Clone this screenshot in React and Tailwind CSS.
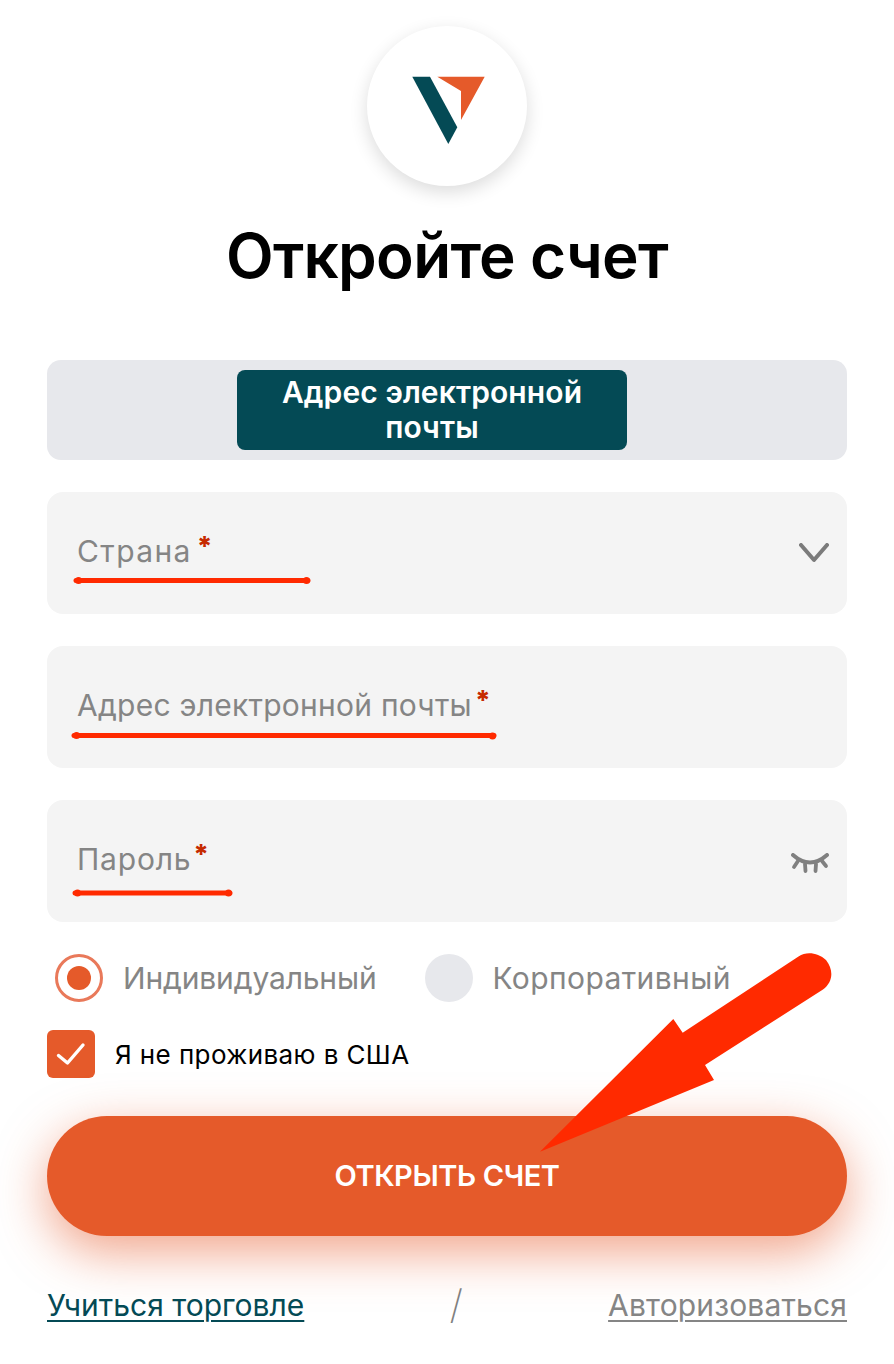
import React from "react";

const F = { fontFamily: '"Inter", "Noto Sans", sans-serif' };

function Field({ label, track, star, icon }) {
  return (
    <div className="flex h-[122px] items-center justify-between rounded-[16px] bg-[#f4f4f4] pl-[30px] pr-[18px]">
      <div className="flex items-start pb-[4px] text-[30px] leading-[36px] text-[#858585]">
        <span className={track}>{label}</span>
        <span className={`mt-[2px] text-[27px] font-extrabold leading-[24px] text-[#c62a00] ${star}`}>*</span>
      </div>
      {icon}
    </div>
  );
}

function Chevron() {
  return (
    <svg width="30" height="20" viewBox="0 0 30 20" fill="none">
      <path d="M2 2L15 17L28 2" stroke="#7b7b7b" strokeWidth="4" strokeLinecap="round" strokeLinejoin="round" />
    </svg>
  );
}

function Lash() {
  return (
    <svg width="40" height="22" viewBox="0 0 40 22" fill="none" className="mt-[6px] -mr-[1px]">
      <path d="M3 2Q20 17 37 2" stroke="#808080" strokeWidth="4" strokeLinecap="round" />
      <path d="M8 8L4 14M15 11L15.5 18M26 11L25.5 18M32 8L36 13" stroke="#808080" strokeWidth="3.8" strokeLinecap="round" />
    </svg>
  );
}

export default function App() {
  return (
    <div className="relative min-h-[1364px] w-[894px] overflow-hidden bg-white" style={F}>
      <div className="flex flex-col px-[47px] pt-[26px]">
        <div className="flex h-[160px] w-[160px] items-center justify-center self-center rounded-full bg-white shadow-[0_6px_18px_rgba(0,0,0,0.14)]">
          <svg width="74" height="68" viewBox="412 76 74 68" className="ml-[4px] mt-[8px]">
            <path d="M412.3 76.7H430L457.3 127.3L448.3 144Z" fill="#044a55" />
            <path d="M437.3 76.7H484.7L461 120V91Z" fill="#e55a2a" />
          </svg>
        </div>

        <h1 className="mt-[30px] text-center text-[62px] font-semibold leading-[80px] tracking-[-0.7px] text-black">
          Откройте счет
        </h1>

        <div className="mt-[64px] flex h-[100px] items-center rounded-[14px] bg-[#e7e8ec] pl-[190px]">
          <div className="flex h-[80px] w-[390px] items-center justify-center rounded-[8px] bg-[#044a55] text-center text-[30px] font-semibold leading-[35px] tracking-[0.1px] text-white">
            Адрес электронной<br />почты
          </div>
        </div>

        <div className="mt-[32px] flex flex-col gap-[32px]">
          <Field label="Страна" track="tracking-[1.4px]" star="ml-[5px]" icon={<Chevron />} />
          <Field label="Адрес электронной почты" track="tracking-[0.25px]" star="ml-[3px]" />
          <Field label="Пароль" track="tracking-[0.8px]" star="ml-[2px]" icon={<Lash />} />
        </div>

        <div className="mt-[32px] flex h-[48px] items-center text-[30px] text-[#858585]">
          <div className="ml-[8px] flex h-[48px] w-[48px] items-center justify-center rounded-full border-[3px] border-[#e9795a] bg-white">
            <div className="h-[24px] w-[24px] rounded-full bg-[#e55a2a]" />
          </div>
          <span className="ml-[20px] tracking-[-0.15px]">Индивидуальный</span>
          <div className="ml-[48px] h-[48px] w-[48px] rounded-full bg-[#e7e8ec]" />
          <span className="ml-[20px] tracking-[0.4px]">Корпоративный</span>
        </div>

        <div className="mt-[28px] flex h-[48px] items-center">
          <div className="flex h-[48px] w-[48px] items-center justify-center rounded-[6px] bg-[#e55a2a]">
            <svg width="30" height="24" viewBox="0 0 30 24" fill="none">
              <path d="M2.5 13.5L11.5 21L27 3" stroke="#fff" strokeWidth="3.4" strokeLinecap="round" strokeLinejoin="round" />
            </svg>
          </div>
          <span className="ml-[20px] pt-[1px] text-[26px] tracking-[0.4px] text-black">Я не проживаю в США</span>
        </div>

        <div className="mt-[38px] flex h-[120px] items-center justify-center rounded-full bg-[#e55a2a] text-[29px] font-semibold tracking-[-0.4px] text-white shadow-[0_16px_50px_rgba(229,90,42,0.55)]">
          ОТКРЫТЬ СЧЕТ
        </div>

        <div className="mt-[49px] flex h-[40px] items-center justify-between text-[30px] leading-[40px]">
          <a className="text-[#044a55] underline decoration-2 underline-offset-[4px]">Учиться торговле</a>
          <span className="text-[40px] font-extralight text-[#808080]">/</span>
          <a className="tracking-[0.15px] text-[#858585] underline decoration-2 underline-offset-[4px]">Авторизоваться</a>
        </div>
      </div>

      <svg className="pointer-events-none absolute left-0 top-0" width="894" height="1364" viewBox="0 0 894 1364" fill="none">
        <g stroke="#ff2a00" strokeLinecap="round">
          <path d="M76 580.5H308" strokeWidth="5" />
          <path d="M74 735.5H494" strokeWidth="5" />
          <path d="M75 893H230" strokeWidth="5" />
        </g>
        <g fill="#ff2a00">
          <circle cx="78.5" cy="580.5" r="3.5" /><circle cx="306.5" cy="580.5" r="3.5" />
          <circle cx="76.5" cy="735.5" r="3.5" /><circle cx="492.5" cy="736" r="3.5" />
          <circle cx="77.5" cy="893" r="3.5" /><circle cx="228.5" cy="893" r="3.5" />
          <path d="M540 1151.7L673.3 1019L682.7 1032.7L798.5 956.5C807 951 818 953 826 960C834 970 833 982 823 989.5L705 1065L714 1080Z" />
        </g>
      </svg>
    </div>
  );
}
